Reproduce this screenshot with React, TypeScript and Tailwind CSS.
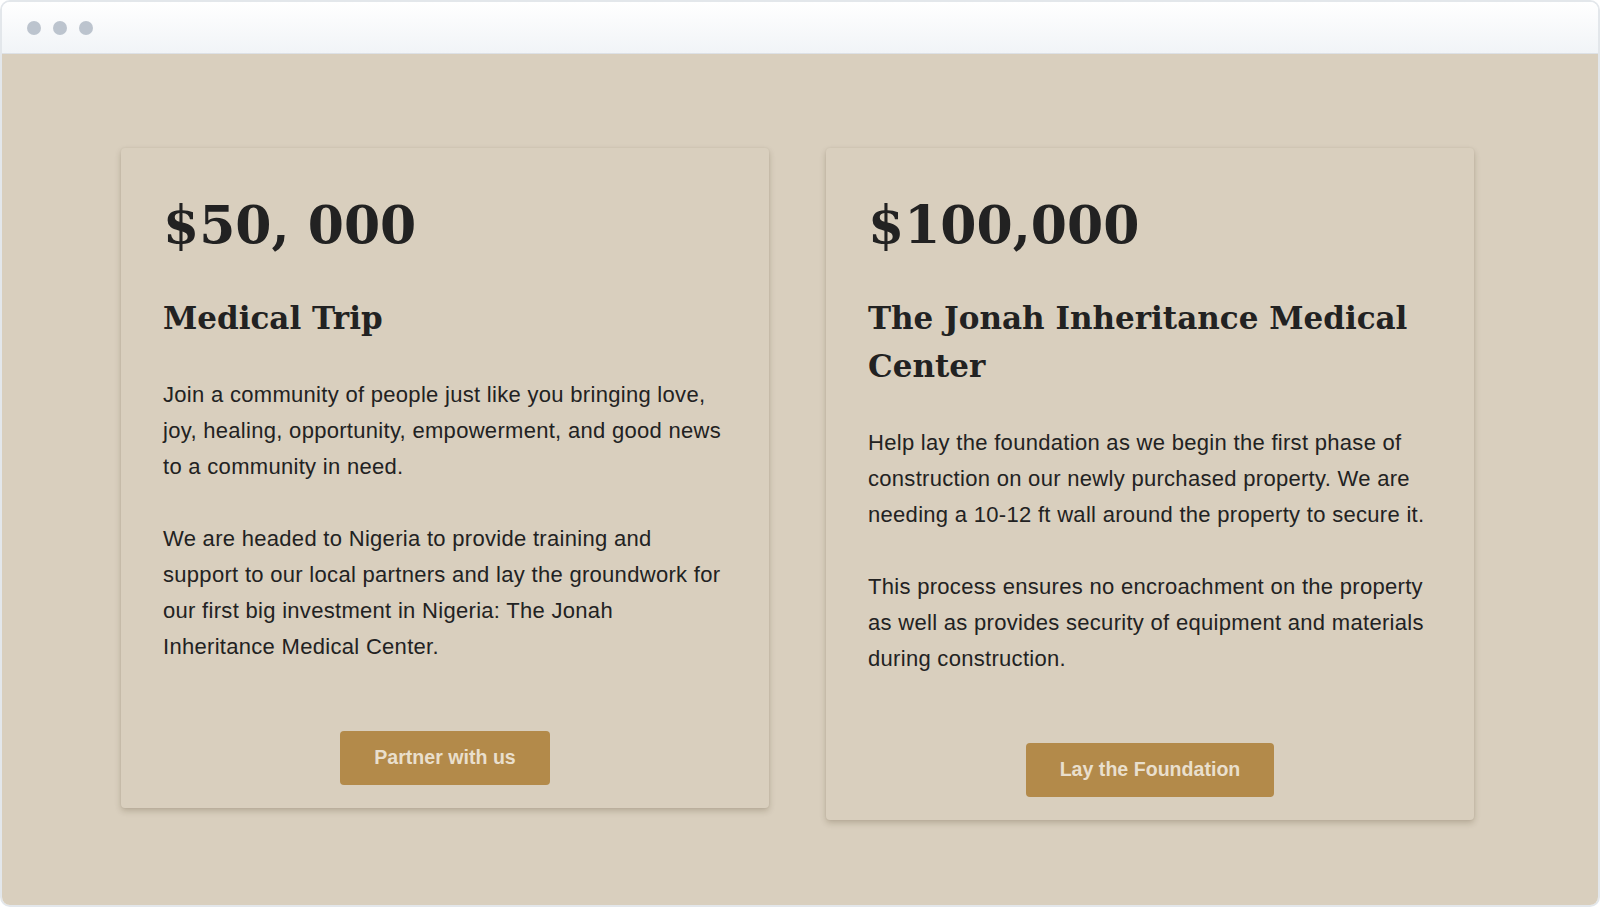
import React from "react";

const serif = { fontFamily: '"DejaVu Serif", Georgia, serif' };

function Card({
  price,
  title,
  paras,
  button,
}: {
  price: string;
  title: string;
  paras: string[];
  button: string;
}) {
  return (
    <div className="w-[648px] rounded-[4px] bg-[#d9cfbe] shadow-[0_3px_6px_rgba(60,45,20,0.22),0_0_2px_rgba(60,45,20,0.08)] px-[42px] pt-[45px] pb-[23px] flex flex-col">
      <div
        className="text-[52px] leading-[64px] font-bold text-[#222222]"
        style={serif}
      >
        {price}
      </div>
      <h3
        className="mt-[37px] text-[31px] leading-[48px] font-bold text-[#222222]"
        style={serif}
      >
        {title}
      </h3>
      <div className="mt-[35px] flex flex-col gap-[36px] font-['Liberation_Sans',Arial,sans-serif] text-[22px] leading-[36px] tracking-[0.3px] text-[#222222]">
        {paras.map((p, i) => (
          <p key={i}>{p}</p>
        ))}
      </div>
      <div className="mt-[66px] flex justify-center">
        <button className="h-[54px] px-[34px] rounded-[4px] bg-[#b38a4a] text-[#e9dfcd] font-['Liberation_Sans',Arial,sans-serif] font-bold text-[19.6px]">
          {button}
        </button>
      </div>
    </div>
  );
}

export default function App() {
  return (
    <div className="w-[1600px] h-[907px] bg-white">
      <div className="w-full h-full flex flex-col rounded-[10px] border-2 border-[#e3e7eb] overflow-hidden">
        <div className="h-[52px] shrink-0 bg-gradient-to-b from-white to-[#f1f4f7] border-b border-[#dde1e6] flex items-center pl-[25px] gap-[12px]">
          <span className="w-[14px] h-[14px] rounded-full bg-[#bcc4ce]" />
          <span className="w-[14px] h-[14px] rounded-full bg-[#bcc4ce]" />
          <span className="w-[14px] h-[14px] rounded-full bg-[#bcc4ce]" />
        </div>
        <div className="flex-1 bg-[#d9cfbe] pt-[94px] pl-[119px] flex items-start gap-[57px]">
          <Card
            price="$50, 000"
            title="Medical Trip"
            paras={[
              "Join a community of people just like you bringing love, joy, healing, opportunity, empowerment, and good news to a community in need.",
              "We are headed to Nigeria to provide training and support to our local partners and lay the groundwork for our first big investment in Nigeria: The Jonah Inheritance Medical Center.",
            ]}
            button="Partner with us"
          />
          <Card
            price="$100,000"
            title="The Jonah Inheritance Medical Center"
            paras={[
              "Help lay the foundation as we begin the first phase of construction on our newly purchased property. We are needing a 10-12 ft wall around the property to secure it.",
              "This process ensures no encroachment on the property as well as provides security of equipment and materials during construction.",
            ]}
            button="Lay the Foundation"
          />
        </div>
      </div>
    </div>
  );
}
